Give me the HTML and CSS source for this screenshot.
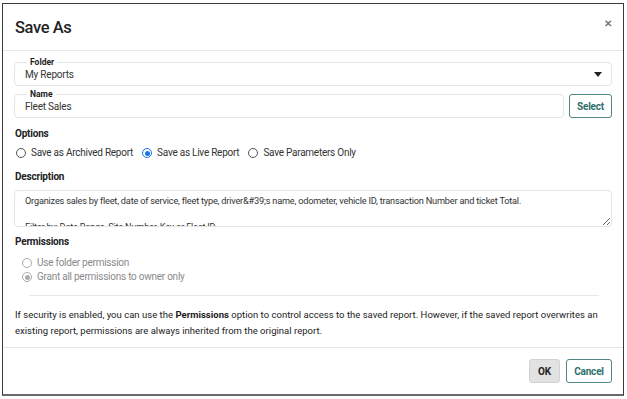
FILE: index.html
```html
<!DOCTYPE html>
<html lang="en">
<head>
  <meta charset="UTF-8">
  <title>Save As</title>
  <link rel="stylesheet" href="styles.css">
</head>
<body>

<div class="dialog">
  <div class="dialog-header">
    <h2>Save As</h2>
    <span class="close">&#10005;</span>
  </div>

  <div class="dialog-body">
    <fieldset class="field">
      <legend>Folder</legend>
      <div class="select-value">
        <span>My Reports</span>
        <span class="caret"></span>
      </div>
    </fieldset>

    <div class="name-row">
      <fieldset class="field">
        <legend>Name</legend>
        <div class="text-value">Fleet Sales</div>
      </fieldset>
      <button class="btn btn-outline">Select</button>
    </div>

    <h3>Options</h3>
    <div class="radio-row">
      <label class="radio"><input type="radio" name="opt"> Save as Archived Report</label>
      <label class="radio"><input type="radio" name="opt" checked> Save as Live Report</label>
      <label class="radio"><input type="radio" name="opt"> Save Parameters Only</label>
    </div>

    <h3 class="desc-title">Description</h3>
    <textarea class="desc">Organizes sales by fleet, date of service, fleet type, driver&amp;#39;s name, odometer, vehicle ID, transaction Number and ticket Total.

Filter by: Date Range, Site Number, Key or Fleet ID</textarea>

    <h3 class="perm-title">Permissions</h3>
    <div class="radio-list">
      <label class="radio disabled"><input type="radio" name="perm" disabled> Use folder permission</label>
      <label class="radio disabled"><input type="radio" name="perm" disabled checked> Grant all permissions to owner only</label>
    </div>

    <hr class="sep">

    <p class="note">If security is enabled, you can use the <b>Permissions</b> option to control access to the saved report. However, if the saved report overwrites an existing report, permissions are always inherited from the original report.</p>
  </div>

  <div class="dialog-footer">
    <button class="btn btn-grey">OK</button>
    <button class="btn btn-outline">Cancel</button>
  </div>
</div>

</body>
</html>
```

FILE: styles.css
```css
* {
  box-sizing: border-box;
}
body {
  margin: 0;
  padding: 3px 3px 3px 2px;
  background: white;
  font-family: Roboto, "Liberation Sans", sans-serif;
  color: #222;
}
.dialog {
  width: 622px;
  height: 393px;
  border: 1px solid #3a3a3a;
  border-bottom: 2px solid #6a6a6a;
  display: flex;
  flex-direction: column;
}
.dialog-header {
  height: 47px;
  display: flex;
  justify-content: space-between;
  align-items: flex-start;
  padding: 0 11px 0 12px;
  border-bottom: 1px solid #e6e6e6;
}
.dialog-header h2 {
  margin: 14px 0 0;
  font-size: 16.5px;
  font-weight: 500;
  line-height: 20px;
  letter-spacing: -0.4px;
}
.close {
  margin-top: 14px;
  font-size: 9.5px;
  font-weight: bold;
  color: #777;
}
.dialog-body {
  flex: 1;
  padding: 6px 11px 0 11px;
}
.field {
  margin: 0;
  padding: 0 10px 3px;
  border: 1px solid #e4e4e4;
  border-radius: 4px;
  min-width: 0;
}
.field legend {
  margin-left: 2px;
  padding: 0 3px;
  font-size: 8.5px;
  font-weight: bold;
  line-height: 10px;
  color: #222;
}
.select-value, .text-value {
  font-size: 10px;
  line-height: 15px;
  letter-spacing: -0.2px;
  color: #333;
}
.select-value {
  display: flex;
  justify-content: space-between;
  align-items: center;
}
.caret {
  width: 0;
  height: 0;
  border-left: 4px solid transparent;
  border-right: 4px solid transparent;
  border-top: 5px solid #222;
  margin-right: -1px;
}
.name-row {
  display: flex;
  align-items: flex-end;
  gap: 5px;
  margin-top: 3px;
}
.name-row .field {
  flex: 1;
}
.btn {
  font-family: Roboto, "Liberation Sans", sans-serif;
  font-size: 10px;
  font-weight: bold;
  letter-spacing: -0.2px;
  height: 24px;
  border-radius: 3px;
  padding: 0 7px;
  cursor: pointer;
}
.btn-outline {
  background: white;
  color: #2f6f6c;
  border: 1px solid #4e8785;
}
.btn-grey {
  background: #e2e2e2;
  color: #222;
  border: 1px solid #d2d2d2;
  width: 31px;
  padding: 0;
}
h3 {
  margin: 9px 0 0 1px;
  font-size: 10px;
  font-weight: bold;
  line-height: 14px;
  letter-spacing: -0.2px;
}
.desc-title {
  margin-top: 10px;
}
.perm-title {
  margin-top: 8px;
}
.radio-row {
  display: flex;
  gap: 9px;
  margin: 5px 0 0 2px;
}
.radio {
  display: flex;
  align-items: center;
  gap: 5px;
  font-size: 10px;
  line-height: 14px;
  letter-spacing: -0.25px;
  color: #333;
}
.radio input {
  appearance: none;
  margin: 0;
  width: 10px;
  height: 10px;
  border: 1px solid #555;
  border-radius: 50%;
  display: grid;
  place-items: center;
}
.radio input:checked {
  border-color: #1a73e8;
}
.radio input:checked::after {
  content: "";
  width: 5px;
  height: 5px;
  border-radius: 50%;
  background: #1a73e8;
}
.radio.disabled {
  color: #8a8a8a;
}
.radio.disabled input {
  border-color: #aaa;
}
.radio.disabled input:checked::after {
  background: #aaa;
}
.desc {
  display: block;
  width: 100%;
  height: 37px;
  margin-top: 6px;
  padding: 3px 10px;
  border: 1px solid #e4e4e4;
  border-radius: 4px;
  font-family: Roboto, "Liberation Sans", sans-serif;
  font-size: 9.2px;
  line-height: 13px;
  letter-spacing: -0.2px;
  color: #333;
  overflow: hidden;
  resize: both;
}
.radio-list {
  margin: 7px 0 0 8px;
}
.sep {
  margin: 11px 13px 0 15px;
  border: 0;
  border-top: 1px solid #e8e8e8;
}
.note {
  margin: 11px 0 0 1px;
  font-size: 9.5px;
  line-height: 16px;
  letter-spacing: 0.02px;
  color: #222;
}
.dialog-footer {
  height: 47px;
  border-top: 1px solid #e6e6e6;
  display: flex;
  justify-content: flex-end;
  align-items: flex-start;
  gap: 6px;
  padding: 11px 11px 0 0;
}
.dialog-footer .btn-outline {
  width: 46px;
  padding: 0;
}
```
